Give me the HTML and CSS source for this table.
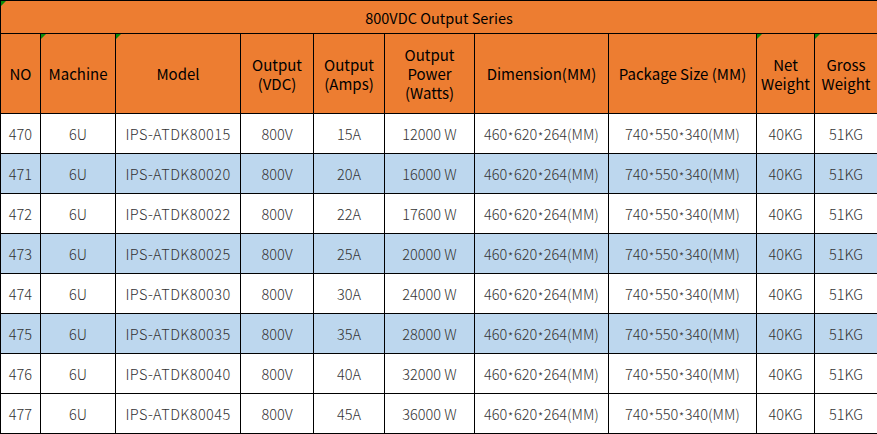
FILE: index.html
```html
<!DOCTYPE html>
<html>
<head>
<meta charset="utf-8">
<link rel="stylesheet" href="styles.css">
</head>
<body>
<table class="spec">
  <colgroup>
    <col class="c1"><col class="c2"><col class="c3"><col class="c4"><col class="c5">
    <col class="c6"><col class="c7"><col class="c8"><col class="c9"><col class="c10">
  </colgroup>
  <thead>
    <tr class="title-row"><th colspan="10" class="flag">800VDC Output Series</th></tr>
    <tr class="head-row">
      <th>NO</th>
      <th class="flag">Machine</th>
      <th class="flag">Model</th>
      <th>Output<br>(VDC)</th>
      <th>Output<br>(Amps)</th>
      <th>Output<br>Power<br>(Watts)</th>
      <th>Dimension(MM)</th>
      <th>Package Size (MM)</th>
      <th class="flag">Net<br>Weight</th>
      <th class="flag">Gross<br>Weight</th>
    </tr>
  </thead>
  <tbody>
    <tr><td>470</td><td>6U</td><td class="model">IPS-ATDK80015</td><td>800V</td><td>15A</td><td>12000 W</td><td>460<span class="x">*</span>620<span class="x">*</span>264(MM)</td><td>740<span class="x">*</span>550<span class="x">*</span>340(MM)</td><td>40KG</td><td>51KG</td></tr>
    <tr class="alt"><td>471</td><td>6U</td><td class="model">IPS-ATDK80020</td><td>800V</td><td>20A</td><td>16000 W</td><td>460<span class="x">*</span>620<span class="x">*</span>264(MM)</td><td>740<span class="x">*</span>550<span class="x">*</span>340(MM)</td><td>40KG</td><td>51KG</td></tr>
    <tr><td>472</td><td>6U</td><td class="model">IPS-ATDK80022</td><td>800V</td><td>22A</td><td>17600 W</td><td>460<span class="x">*</span>620<span class="x">*</span>264(MM)</td><td>740<span class="x">*</span>550<span class="x">*</span>340(MM)</td><td>40KG</td><td>51KG</td></tr>
    <tr class="alt"><td>473</td><td>6U</td><td class="model">IPS-ATDK80025</td><td>800V</td><td>25A</td><td>20000 W</td><td>460<span class="x">*</span>620<span class="x">*</span>264(MM)</td><td>740<span class="x">*</span>550<span class="x">*</span>340(MM)</td><td>40KG</td><td>51KG</td></tr>
    <tr><td>474</td><td>6U</td><td class="model">IPS-ATDK80030</td><td>800V</td><td>30A</td><td>24000 W</td><td>460<span class="x">*</span>620<span class="x">*</span>264(MM)</td><td>740<span class="x">*</span>550<span class="x">*</span>340(MM)</td><td>40KG</td><td>51KG</td></tr>
    <tr class="alt"><td>475</td><td>6U</td><td class="model">IPS-ATDK80035</td><td>800V</td><td>35A</td><td>28000 W</td><td>460<span class="x">*</span>620<span class="x">*</span>264(MM)</td><td>740<span class="x">*</span>550<span class="x">*</span>340(MM)</td><td>40KG</td><td>51KG</td></tr>
    <tr><td>476</td><td>6U</td><td class="model">IPS-ATDK80040</td><td>800V</td><td>40A</td><td>32000 W</td><td>460<span class="x">*</span>620<span class="x">*</span>264(MM)</td><td>740<span class="x">*</span>550<span class="x">*</span>340(MM)</td><td>40KG</td><td>51KG</td></tr>
    <tr><td>477</td><td>6U</td><td class="model">IPS-ATDK80045</td><td>800V</td><td>45A</td><td>36000 W</td><td>460<span class="x">*</span>620<span class="x">*</span>264(MM)</td><td>740<span class="x">*</span>550<span class="x">*</span>340(MM)</td><td>40KG</td><td>51KG</td></tr>
  </tbody>
</table>
</body>
</html>
```
FILE: styles.css
```css
html, body {
  margin: 0;
  padding: 0;
  background: #ffffff;
}

.spec {
  border-collapse: collapse;
  table-layout: fixed;
  width: 877px;
  font-family: "Noto Sans CJK SC", "Noto Sans", sans-serif;
}

.c1 { width: 40px; }
.c2 { width: 75px; }
.c3 { width: 125px; }
.c4 { width: 73px; }
.c5 { width: 71px; }
.c6 { width: 90px; }
.c7 { width: 134px; }
.c8 { width: 148px; }
.c9 { width: 58px; }
.c10 { width: 63px; }

.spec th,
.spec td {
  border: 1px solid #000;
  padding: 0;
  text-align: center;
  vertical-align: middle;
  overflow: hidden;
  white-space: nowrap;
}

.spec th {
  background: #ed7d31;
  color: #000;
  font-weight: 400;
  font-size: 15px;
  line-height: 19px;
  position: relative;
}

.title-row th {
  height: 32px;
  font-size: 14.5px;
}

.head-row th {
  height: 79px;
}

.flag::before {
  content: "";
  position: absolute;
  left: 0;
  top: 0;
  width: 0;
  height: 0;
  border-top: 5px solid #0a8a0a;
  border-right: 5px solid transparent;
}

.spec td {
  height: 39px;
  font-size: 14.5px;
  line-height: 19px;
  color: #333;
  font-weight: 300;
}

.spec td.model {
  letter-spacing: 0.4px;
}

.spec td .x {
  font-size: 12.5px;
  line-height: 0;
  vertical-align: -2px;
  margin: 0 0.5px;
}

.spec tr.alt td {
  background: #bdd7ee;
}
```
